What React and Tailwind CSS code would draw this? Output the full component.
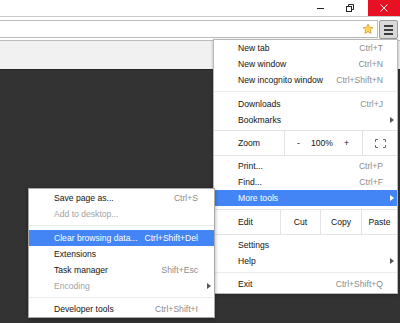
import React from 'react';

const Arrow = ({ white }) => (
    <svg width="4" height="6" viewBox="0 0 4 6" className="absolute right-[3px] top-[5px]">
        <path d="M0 0 L4 3 L0 6 Z" fill={white ? '#fff' : '#555'} />
    </svg>
);

function Item({ label, shortcut, arrow, active, disabled, sub }) {
    const tone = active ? 'bg-[#4385f4] text-white' : disabled ? 'text-[#a3a3a3]' : 'text-[#141414]';
    const pad = sub ? 'pl-[25px] pr-[16px]' : 'pl-[24px] pr-[14px]';
    return (
        <div className={`relative flex h-[16px] items-center justify-between ${pad} ${tone}`}>
            <span>{label}</span>
            {shortcut && <span className={active ? 'text-white' : 'text-[#8c8c8c]'}>{shortcut}</span>}
            {arrow && <Arrow white={active} />}
        </div>
    );
}

const Sep = ({ h = 'h-[8px]', top = 'pt-[3px]' }) => (
    <div className={`${h} ${top}`}>
        <div className="h-px bg-[#ebebeb]" />
    </div>
);

export default function App() {
    return (
        <div className="relative flex h-[323px] w-[400px] flex-col overflow-hidden bg-[#333333] font-['Liberation_Sans',Arial,sans-serif] text-[8.6px] leading-none">
            {/* title bar */}
            <div className="flex h-[16px] justify-end bg-white">
                <div className="flex w-[30px] items-center justify-center">
                    <div className="h-px w-[7px] bg-[#222]" />
                </div>
                <div className="ml-[3px] flex w-[24px] items-center justify-center">
                    <svg width="8" height="8" viewBox="0 0 8 8">
                        <rect x="0.5" y="2.5" width="5" height="5" fill="none" stroke="#222" />
                        <path d="M2.5 2.5 V0.5 H7.5 V5.5 H5.5" fill="none" stroke="#222" />
                    </svg>
                </div>
                <div className="ml-[6px] flex w-[32px] items-center justify-center bg-[#e81123]">
                    <svg width="8" height="8" viewBox="0 0 8 8">
                        <path d="M0.5 0.5 L7.5 7.5 M7.5 0.5 L0.5 7.5" stroke="#fff" strokeWidth="1" />
                    </svg>
                </div>
            </div>
            {/* toolbar */}
            <div className="flex h-[24px] items-start border-t border-[#c9c9c9] bg-white pt-[3px]">
                <div className="relative h-[18px] flex-1 border-y border-r border-[#bdbdbd] bg-white">
                    <svg width="12" height="12" viewBox="0 0 24 24" className="absolute right-[3px] top-[2px]">
                        <path
                            d="M12 2 L14.9 8.6 L22 9.3 L16.6 14 L18.2 21 L12 17.3 L5.8 21 L7.4 14 L2 9.3 L9.1 8.6 Z"
                            fill="#f9d65c"
                            stroke="#d99a2b"
                            strokeWidth="1.6"
                            strokeLinejoin="round"
                        />
                    </svg>
                </div>
                <div className="ml-[1px] mr-[2px] flex h-[19px] w-[19px] flex-col items-center justify-center gap-[2px] rounded-[2px] border border-[#9c9c9c] bg-[#d9d9d9]">
                    <div className="h-[2px] w-[9px] bg-[#3d3d3d]" />
                    <div className="h-[2px] w-[9px] bg-[#3d3d3d]" />
                    <div className="h-[2px] w-[9px] bg-[#3d3d3d]" />
                </div>
            </div>
            <div className="h-[29px] border-t border-[#bcbcbc] bg-[#f1f1f1]" />
            <div className="flex-1 border-t border-[#262626] bg-[#333333]" />

            {/* main menu */}
            <div className="absolute left-[213px] top-[39px] w-[185px] border border-[#b8b8b8] bg-white pb-px shadow-[0_1px_3px_rgba(0,0,0,0.25)]">
                <Item label="New tab" shortcut="Ctrl+T" />
                <Item label="New window" shortcut="Ctrl+N" />
                <Item label="New incognito window" shortcut="Ctrl+Shift+N" />
                <Sep />
                <Item label="Downloads" shortcut="Ctrl+J" />
                <Item label="Bookmarks" arrow />
                <div className="mt-[2px] flex h-[26px] border-y border-[#e3e3e3] text-[#141414]">
                    <div className="flex w-[70px] items-center pl-[24px]">Zoom</div>
                    <div className="flex w-[78px] items-center justify-between border-l border-[#e3e3e3] pl-[12px] pr-[13px]">
                        <span>-</span>
                        <span>100%</span>
                        <span>+</span>
                    </div>
                    <div className="flex flex-1 items-center justify-center border-l border-[#e3e3e3]">
                        <svg width="11" height="9" viewBox="0 0 11 9">
                            <path
                                d="M0.5 3 V0.5 H3 M8 0.5 H10.5 V3 M10.5 6 V8.5 H8 M3 8.5 H0.5 V6"
                                fill="none"
                                stroke="#6a6a6a"
                                strokeWidth="1"
                            />
                        </svg>
                    </div>
                </div>
                <div className="h-[2px]" />
                <Item label="Print..." shortcut="Ctrl+P" />
                <Item label="Find..." shortcut="Ctrl+F" />
                <Item label="More tools" arrow active />
                <div className="mt-[3px] flex h-[26px] border-y border-[#e3e3e3] text-[#141414]">
                    <div className="flex w-[66px] items-center pl-[24px]">Edit</div>
                    <div className="flex w-[40px] items-center justify-center border-l border-[#e3e3e3]">Cut</div>
                    <div className="flex w-[41px] items-center justify-center border-l border-[#e3e3e3]">Copy</div>
                    <div className="flex flex-1 items-center justify-center border-l border-[#e3e3e3]">Paste</div>
                </div>
                <div className="h-[2px]" />
                <Item label="Settings" />
                <Item label="Help" arrow />
                <Sep h="h-[7px]" />
                <Item label="Exit" shortcut="Ctrl+Shift+Q" />
            </div>

            {/* more tools submenu */}
            <div className="absolute left-[28px] top-[188px] w-[187px] border border-[#a9a9a9] bg-white pt-[1px] shadow-[0_1px_4px_rgba(0,0,0,0.35)]">
                <Item sub label="Save page as..." shortcut="Ctrl+S" />
                <Item sub label="Add to desktop..." disabled />
                <Sep />
                <Item sub label="Clear browsing data..." shortcut="Ctrl+Shift+Del" active />
                <Item sub label="Extensions" />
                <Item sub label="Task manager" shortcut="Shift+Esc" />
                <Item sub label="Encoding" arrow disabled />
                <Sep h="h-[7px]" />
                <Item sub label="Developer tools" shortcut="Ctrl+Shift+I" />
            </div>
        </div>
    );
}
